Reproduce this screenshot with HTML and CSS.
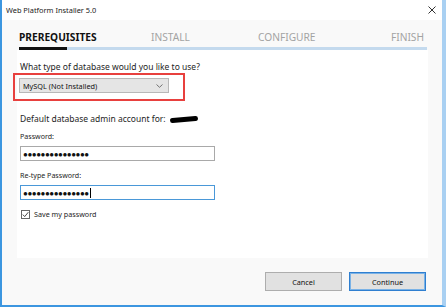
FILE: index.html
```html
<!DOCTYPE html>
<html lang="en">
<head>
  <meta charset="UTF-8" />
  <title>Web Platform Installer 5.0</title>
  <link rel="stylesheet" href="styles.css">
</head>
<body>
  <div class="window">
    <div class="titlebar">
      <span class="title">Web Platform Installer 5.0</span>
      <svg class="close" width="8" height="8" viewBox="0 0 8 8"><path d="M0.5 0.5 L7.5 7.5 M7.5 0.5 L0.5 7.5" stroke="#333" stroke-width="1"/></svg>
    </div>

    <div class="steps">
      <span class="step active">PREREQUISITES</span>
      <span class="step">INSTALL</span>
      <span class="step">CONFIGURE</span>
      <span class="step">FINISH</span>
    </div>
    <div class="progress"><div class="progress-done"></div></div>

    <div class="content">
      <p class="question">What type of database would you like to use?</p>
      <div class="highlight">
        <div class="select">
          <span>MySQL (Not Installed)</span>
          <svg width="7" height="4" viewBox="0 0 7 4"><path d="M0.5 0.5 L3.5 3.3 L6.5 0.5" fill="none" stroke="#666" stroke-width="0.9"/></svg>
        </div>
      </div>

      <div class="account">
        <p class="account-title">Default database admin account for: <span class="redact"></span></p>
        <label class="field-label">Password:</label>
        <div class="input">&#x25CF;&#x25CF;&#x25CF;&#x25CF;&#x25CF;&#x25CF;&#x25CF;&#x25CF;&#x25CF;&#x25CF;&#x25CF;&#x25CF;&#x25CF;&#x25CF;&#x25CF;</div>
        <label class="field-label">Re-type Password:</label>
        <div class="input focused">&#x25CF;&#x25CF;&#x25CF;&#x25CF;&#x25CF;&#x25CF;&#x25CF;&#x25CF;&#x25CF;&#x25CF;&#x25CF;&#x25CF;&#x25CF;&#x25CF;&#x25CF;<span class="caret"></span></div>
        <div class="check-row">
          <span class="checkbox">
            <svg width="7" height="7" viewBox="0 0 7 7"><path d="M0.8 3.6 L2.7 5.6 L6.3 1.2" fill="none" stroke="#333" stroke-width="0.9"/></svg>
          </span>
          <span>Save my password</span>
        </div>
      </div>
    </div>

    <div class="footer">
      <button class="btn">Cancel</button>
      <button class="btn primary">Continue</button>
    </div>
  </div>
</body>
</html>
```

FILE: styles.css
```css
body {
  margin: 0;
  font-family: "Noto Sans", "Open Sans", sans-serif;
  font-size: 8.5px;
  color: #1e1e1e;
  background: #ffffff;
}

.window {
  width: 440px;
  height: 305px;
  border-left: 2px solid #3c96e0;
  border-right: 4px solid #a9d0f2;
  border-bottom: 2px solid #3c96e0;
  background: #f9f9f9;
}

.titlebar {
  height: 20px;
  background: #ffffff;
  display: flex;
  align-items: center;
  justify-content: space-between;
  padding: 0 6px 0 4px;
}

.title {
  font-size: 7.4px;
  color: #222;
}

.close {
  margin-right: 0;
}

.steps {
  display: grid;
  grid-template-columns: 132px 107px 1fr auto;
  padding: 0 18px 0 17px;
  height: 27px;
  line-height: 14px;
  padding-top: 10px;
  box-sizing: border-box;
  font-size: 10.2px;
  color: #a3a3a3;
}

.step.active {
  color: #111;
  font-weight: bold;
}

.progress {
  margin: 0 15px 0 17px;
  height: 3px;
  background: #c4daee;
}

.progress-done {
  width: 48px;
  height: 3px;
  background: #111;
}

.content {
  margin: 0 14px 0 15px;
  height: 208px;
  background: #ffffff;
  padding: 11px 0 0 3px;
  box-sizing: border-box;
}

.question {
  margin: 0;
  line-height: 12px;
}

.highlight {
  width: 164px;
  height: 21px;
  border: 2px solid #e8403e;
  margin-left: -7px;
  padding: 3px 0 0 4px;
  box-sizing: content-box;
}

.select {
  width: 150px;
  height: 15px;
  background: #e5e5e5;
  border: 1px solid #b8b8b8;
  display: flex;
  align-items: center;
  justify-content: space-between;
  padding: 0 5px 0 3px;
  box-sizing: border-box;
  font-size: 7.3px;
  color: #111;
}

.account {
  width: 203px;
  margin-top: 12px;
}

.account-title {
  margin: 0 0 6px;
  line-height: 12px;
  display: flex;
  align-items: center;
  gap: 4px;
}

.redact {
  display: inline-block;
  width: 28px;
  height: 5px;
  background: #000;
  border-radius: 3px;
  transform: rotate(-5deg);
}

.field-label {
  display: block;
  font-size: 7.1px;
  line-height: 10px;
  margin-bottom: 5px;
}

.input {
  width: 195px;
  height: 15px;
  box-sizing: border-box;
  border: 1px solid #a9a9a9;
  background: #fff;
  font-size: 8px;
  letter-spacing: -0.45px;
  padding-left: 2px;
  margin-bottom: 9px;
  display: flex;
  align-items: center;
  color: #111;
}

.input.focused {
  border-color: #4a98d8;
}

.caret {
  width: 1px;
  height: 10px;
  background: #000;
  margin-left: 1px;
}

.check-row {
  display: flex;
  align-items: center;
  gap: 4px;
  font-size: 7.2px;
  line-height: 10px;
  padding-left: 1px;
}

.checkbox {
  width: 7px;
  height: 7px;
  border: 1px solid #666;
  display: flex;
  align-items: center;
  justify-content: center;
  background: #fff;
}

.footer {
  display: flex;
  justify-content: flex-end;
  gap: 7px;
  padding: 14px 16px 0 0;
}

.btn {
  width: 77px;
  height: 19px;
  font-family: inherit;
  font-size: 7.3px;
  color: #111;
  background: #e1e1e1;
  border: 1px solid #adadad;
  padding: 0;
}

.btn.primary {
  border: 1px solid #2f7fd0;
  box-shadow: inset 0 0 0 1px #7ab2e6;
}
```
